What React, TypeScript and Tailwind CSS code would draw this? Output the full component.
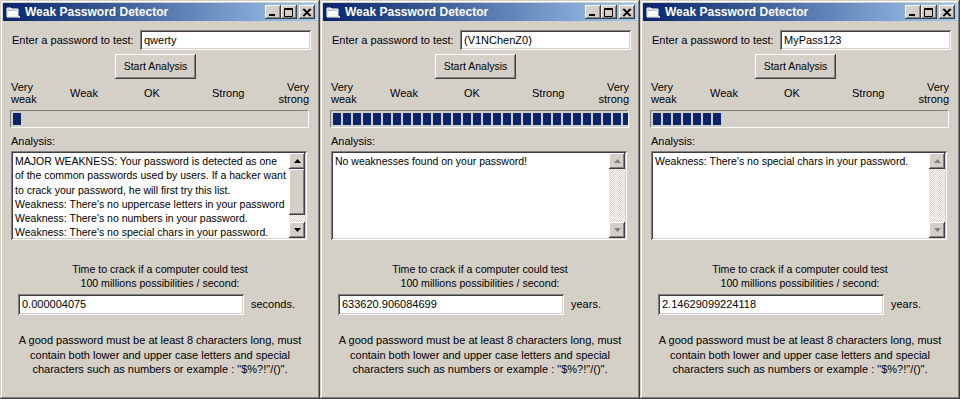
import React from "react";

type WinProps = {
  password: string;
  blocks: number;
  lines: string[];
  scroll: boolean;
  time: string;
  unit: string;
};

const raised =
  "shadow-[inset_-1px_-1px_#404040,inset_1px_1px_#ffffff,inset_-2px_-2px_#808080,inset_2px_2px_#d4d0c8]";
const sunken =
  "shadow-[inset_1px_1px_#808080,inset_-1px_-1px_#ffffff,inset_2px_2px_#404040,inset_-2px_-2px_#d4d0c8]";
const dither =
  "bg-[repeating-conic-gradient(#d4d0c8_0_25%,#ffffff_0_50%)] bg-[length:2px_2px]";

function AppIcon() {
  return (
    <svg width="16" height="16" viewBox="0 0 16 16" className="shrink-0">
      <path d="M2 4h4l1 1h6v8H2z" fill="#d4d0c8" stroke="#ffffff" strokeWidth="1" />
      <path d="M3 6h9v6H3z" fill="#ffffff" />
      <path d="M3 6h9v1H3z" fill="#a6caf0" />
      <rect x="13" y="12" width="2" height="2" fill="#d4d0c8" />
    </svg>
  );
}

function TitleButton({ kind }: { kind: "min" | "max" | "close" }) {
  return (
    <div className={`w-[16px] h-[14px] bg-[#d4d0c8] flex items-center justify-center ${raised}`}>
      <svg width="10" height="9" viewBox="0 0 10 9">
        {kind === "min" && <rect x="1" y="6" width="6" height="2" fill="#000" />}
        {kind === "max" && (
          <path d="M0.5 0.5h8v8h-8z M0.5 1.5h8" fill="none" stroke="#000" strokeWidth="1" />
        )}
        {kind === "close" && (
          <path d="M1 1l7 7M8 1l-7 7M2 1l7 7M9 1l-7 7" stroke="#000" strokeWidth="1.1" />
        )}
      </svg>
    </div>
  );
}

function Arrow({ up, enabled }: { up: boolean; enabled: boolean }) {
  const c = enabled ? "#000000" : "#808080";
  return (
    <div className={`w-[16px] h-[16px] bg-[#d4d0c8] flex items-center justify-center ${raised}`}>
      <svg width="7" height="4" viewBox="0 0 7 4">
        {up ? <path d="M3.5 0L7 4H0z" fill={c} /> : <path d="M0 0h7L3.5 4z" fill={c} />}
      </svg>
    </div>
  );
}

function Win({ password, blocks, lines, scroll, time, unit }: WinProps) {
  return (
    <div
      className={`w-[320px] h-[399px] shrink-0 bg-[#d4d0c8] p-[3px] flex flex-col shadow-[inset_-1px_-1px_#404040,inset_1px_1px_#d4d0c8,inset_-2px_-2px_#808080,inset_2px_2px_#ffffff] text-[11px] text-black`}
      style={{ fontFamily: '"Liberation Sans", Arial, sans-serif' }}
    >
      {/* title bar */}
      <div className="h-[18px] flex items-center pl-[2px] pr-[2px] bg-gradient-to-r from-[#0a246a] to-[#a6caf0]">
        <AppIcon />
        <span className="ml-[4px] text-white font-bold text-[12px] leading-none">
          Weak Password Detector
        </span>
        <div className="ml-auto flex items-center">
          <TitleButton kind="min" />
          <TitleButton kind="max" />
          <div className="w-[2px]" />
          <TitleButton kind="close" />
        </div>
      </div>

      <div className="flex flex-col pl-[8px]">
        {/* password row */}
        <div className="flex items-center mt-[9px] h-[20px]">
          <span className="ml-[1px]">Enter a password to test:</span>
          <div className={`ml-auto mr-[6px] w-[171px] h-[20px] bg-white pl-[4px] flex items-center ${sunken}`}>
            <span>{password}</span>
          </div>
        </div>

        {/* button */}
        <div
          className={`mt-[4px] ml-[104px] w-[81px] h-[25px] bg-[#d4d0c8] flex items-center justify-center text-[10.5px] ${raised}`}
        >
          Start Analysis
        </div>

        {/* strength labels */}
        <div className="mt-[1px] h-[26px] flex items-center leading-[12px]">
          <div className="w-[59px]">
            Very
            <br />
            weak
          </div>
          <div className="w-[74px]">Weak</div>
          <div className="w-[68px]">OK</div>
          <div className="w-[66px]">Strong</div>
          <div className="text-right w-[31px]">
            Very
            <br />
            strong
          </div>
        </div>

        {/* progress */}
        <div className="mt-[4px] -ml-[1px] w-[299px] h-[18px] border border-t-[#808080] border-l-[#808080] border-b-white border-r-white flex items-stretch gap-[2px] p-[2px] overflow-hidden">
          {Array.from({ length: blocks }).map((_, i) => (
            <div key={i} className="w-[8px] shrink-0 bg-[#0a246a]" />
          ))}
        </div>

        {/* analysis */}
        <div className="mt-[7px] leading-[13px]">Analysis:</div>
        <div className={`mt-[3px] w-[296px] h-[89px] bg-white flex p-[2px] ${sunken}`}>
          <div className="flex-1 pl-[2px] pt-[1px] text-[10.5px] leading-[14.3px] whitespace-nowrap overflow-hidden">
            {lines.map((l, i) => (
              <div key={i}>{l}</div>
            ))}
          </div>
          <div className="w-[16px] flex flex-col">
            <Arrow up enabled={scroll} />
            {scroll ? (
              <>
                <div className={`h-[46px] bg-[#d4d0c8] ${raised}`} />
                <div className={`flex-1 ${dither}`} />
              </>
            ) : (
              <div className={`flex-1 ${dither}`} />
            )}
            <Arrow up={false} enabled={scroll} />
          </div>
        </div>

        {/* time */}
        <div className="mt-[22px] text-center text-[10.6px] leading-[14px] pr-[8px]">
          Time to crack if a computer could test
          <br />
          100 millions possibilities / second:
        </div>
        <div className="mt-[4px] flex items-center h-[21px]">
          <div className={`ml-[7px] w-[226px] h-[21px] bg-white pl-[4px] flex items-center ${sunken}`}>
            {time}
          </div>
          <span className="ml-[7px]">{unit}</span>
        </div>

        <div className="mt-[18px] text-center leading-[14.5px] pr-[8px]">
          A good password must be at least 8 characters long, must
          <br />
          contain both lower and upper case letters and special
          <br />
          characters such as numbers or example : "$%?!"/()".
        </div>
      </div>
    </div>
  );
}

export default function App() {
  return (
    <div className="w-[960px] h-[399px] flex bg-[#d4d0c8] overflow-hidden">
      <Win
        password="qwerty"
        blocks={1}
        scroll
        lines={[
          "MAJOR WEAKNESS: Your password is detected as one",
          "of the common passwords used by users. If a hacker want",
          "to crack your password, he will first try this list.",
          "Weakness: There's no uppercase letters in your password",
          "Weakness: There's no numbers in your password.",
          "Weakness: There's no special chars in your password.",
        ]}
        time="0.000004075"
        unit="seconds."
      />
      <Win
        password="(V1NChenZ0)"
        blocks={30}
        scroll={false}
        lines={["No weaknesses found on your password!"]}
        time="633620.906084699"
        unit="years."
      />
      <Win
        password="MyPass123"
        blocks={7}
        scroll={false}
        lines={["Weakness: There's no special chars in your password."]}
        time="2.14629099224118"
        unit="years."
      />
    </div>
  );
}
